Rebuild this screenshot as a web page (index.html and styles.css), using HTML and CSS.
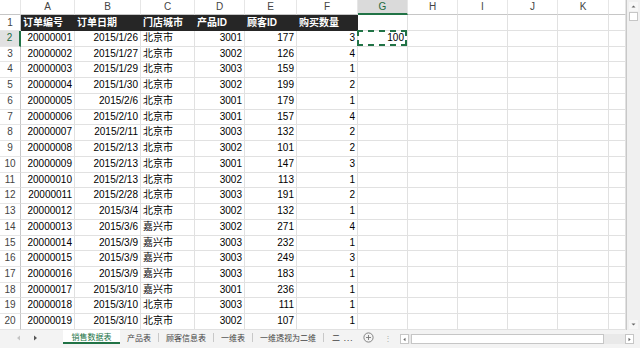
FILE: index.html
```html
<!DOCTYPE html>
<html>
<head>
<meta charset="utf-8">
<link rel="stylesheet" href="styles.css">
</head>
<body>
<div class="app">
  <div class="main">
    <div class="sheet">
      <div class="row hdr"><span></span><span>A</span><span>B</span><span>C</span><span>D</span><span>E</span><span>F</span><span class="sel">G</span><span>H</span><span>I</span><span>J</span><span>K</span><span></span></div>
      <div class="row r1"><span class="rh">1</span><span class="d">订单编号</span><span class="d">订单日期</span><span class="d">门店城市</span><span class="d">产品ID</span><span class="d">顾客ID</span><span class="d">购买数量</span><span></span><span></span><span></span><span></span><span></span><span></span></div>
      <div class="row"><span class="rh sel">2</span><span class="n">20000001</span><span class="n">2015/1/26</span><span>北京市</span><span class="n">3001</span><span class="n">177</span><span class="n">3</span><span class="n cut">100</span><span></span><span></span><span></span><span></span><span></span></div>
      <div class="row"><span class="rh">3</span><span class="n">20000002</span><span class="n">2015/1/27</span><span>北京市</span><span class="n">3002</span><span class="n">126</span><span class="n">4</span><span></span><span></span><span></span><span></span><span></span><span></span></div>
      <div class="row"><span class="rh">4</span><span class="n">20000003</span><span class="n">2015/1/29</span><span>北京市</span><span class="n">3003</span><span class="n">159</span><span class="n">1</span><span></span><span></span><span></span><span></span><span></span><span></span></div>
      <div class="row"><span class="rh">5</span><span class="n">20000004</span><span class="n">2015/1/30</span><span>北京市</span><span class="n">3002</span><span class="n">199</span><span class="n">2</span><span></span><span></span><span></span><span></span><span></span><span></span></div>
      <div class="row"><span class="rh">6</span><span class="n">20000005</span><span class="n">2015/2/6</span><span>北京市</span><span class="n">3001</span><span class="n">179</span><span class="n">1</span><span></span><span></span><span></span><span></span><span></span><span></span></div>
      <div class="row"><span class="rh">7</span><span class="n">20000006</span><span class="n">2015/2/10</span><span>北京市</span><span class="n">3001</span><span class="n">157</span><span class="n">4</span><span></span><span></span><span></span><span></span><span></span><span></span></div>
      <div class="row"><span class="rh">8</span><span class="n">20000007</span><span class="n">2015/2/11</span><span>北京市</span><span class="n">3003</span><span class="n">132</span><span class="n">2</span><span></span><span></span><span></span><span></span><span></span><span></span></div>
      <div class="row"><span class="rh">9</span><span class="n">20000008</span><span class="n">2015/2/13</span><span>北京市</span><span class="n">3002</span><span class="n">101</span><span class="n">2</span><span></span><span></span><span></span><span></span><span></span><span></span></div>
      <div class="row"><span class="rh">10</span><span class="n">20000009</span><span class="n">2015/2/13</span><span>北京市</span><span class="n">3001</span><span class="n">147</span><span class="n">3</span><span></span><span></span><span></span><span></span><span></span><span></span></div>
      <div class="row"><span class="rh">11</span><span class="n">20000010</span><span class="n">2015/2/13</span><span>北京市</span><span class="n">3002</span><span class="n">113</span><span class="n">1</span><span></span><span></span><span></span><span></span><span></span><span></span></div>
      <div class="row"><span class="rh">12</span><span class="n">20000011</span><span class="n">2015/2/28</span><span>北京市</span><span class="n">3003</span><span class="n">191</span><span class="n">2</span><span></span><span></span><span></span><span></span><span></span><span></span></div>
      <div class="row"><span class="rh">13</span><span class="n">20000012</span><span class="n">2015/3/4</span><span>北京市</span><span class="n">3002</span><span class="n">132</span><span class="n">1</span><span></span><span></span><span></span><span></span><span></span><span></span></div>
      <div class="row"><span class="rh">14</span><span class="n">20000013</span><span class="n">2015/3/6</span><span>嘉兴市</span><span class="n">3002</span><span class="n">271</span><span class="n">4</span><span></span><span></span><span></span><span></span><span></span><span></span></div>
      <div class="row"><span class="rh">15</span><span class="n">20000014</span><span class="n">2015/3/9</span><span>嘉兴市</span><span class="n">3003</span><span class="n">232</span><span class="n">1</span><span></span><span></span><span></span><span></span><span></span><span></span></div>
      <div class="row"><span class="rh">16</span><span class="n">20000015</span><span class="n">2015/3/9</span><span>嘉兴市</span><span class="n">3003</span><span class="n">249</span><span class="n">3</span><span></span><span></span><span></span><span></span><span></span><span></span></div>
      <div class="row"><span class="rh">17</span><span class="n">20000016</span><span class="n">2015/3/9</span><span>嘉兴市</span><span class="n">3003</span><span class="n">183</span><span class="n">1</span><span></span><span></span><span></span><span></span><span></span><span></span></div>
      <div class="row"><span class="rh">18</span><span class="n">20000017</span><span class="n">2015/3/10</span><span>嘉兴市</span><span class="n">3001</span><span class="n">236</span><span class="n">1</span><span></span><span></span><span></span><span></span><span></span><span></span></div>
      <div class="row"><span class="rh">19</span><span class="n">20000018</span><span class="n">2015/3/10</span><span>北京市</span><span class="n">3003</span><span class="n">111</span><span class="n">1</span><span></span><span></span><span></span><span></span><span></span><span></span></div>
      <div class="row"><span class="rh">20</span><span class="n">20000019</span><span class="n">2015/3/10</span><span>北京市</span><span class="n">3002</span><span class="n">107</span><span class="n">1</span><span></span><span></span><span></span><span></span><span></span><span></span></div>
    </div>
    <div class="vscroll">
      <div class="vbtn"><svg width="7" height="7" viewBox="0 0 7 7"><path d="M1.5 4.5 L3.5 2.5 L5.5 4.5 Z" fill="#666"/></svg></div>
      <div class="vthumb"></div>
      <div class="vbtn down"><svg width="7" height="7" viewBox="0 0 7 7"><path d="M1.5 2.5 L3.5 4.5 L5.5 2.5 Z" fill="#666"/></svg></div>
    </div>
  </div>
  <div class="tabs">
    <div class="nav">
      <svg width="5" height="6" viewBox="0 0 5 6"><path d="M4 0.5 L1 3 L4 5.5 Z" fill="#c4c4c4"/></svg>
      <svg width="5" height="6" viewBox="0 0 5 6"><path d="M1 0.5 L4 3 L1 5.5 Z" fill="#555"/></svg>
    </div>
    <div class="tab active">销售数据表</div>
    <div class="tab">产品表</div><i class="sep"></i>
    <div class="tab">顾客信息表</div><i class="sep"></i>
    <div class="tab">一维表</div><i class="sep"></i>
    <div class="tab">一维透视为二维</div><i class="sep"></i>
    <div class="tab more">二 ...</div>
    <div class="add"><svg width="11" height="11" viewBox="0 0 11 11"><circle cx="5.5" cy="5.5" r="4.6" fill="none" stroke="#777" stroke-width="0.9"/><path d="M5.5 3 V8 M3 5.5 H8" stroke="#777" stroke-width="0.9"/></svg></div>
    <div class="dots">⋮</div>
    <div class="hscroll">
      <div class="hbtn"><svg width="5" height="5" viewBox="0 0 5 5"><path d="M3.5 0.8 L1.3 2.5 L3.5 4.2 Z" fill="#666"/></svg></div>
      <div class="hthumb"></div>
      <div class="htrack"></div>
      <div class="hbtn"><svg width="5" height="5" viewBox="0 0 5 5"><path d="M1.5 0.8 L3.7 2.5 L1.5 4.2 Z" fill="#666"/></svg></div>
    </div>
  </div>
</div>
</body>
</html>
```
FILE: styles.css
```css
* { box-sizing: border-box; margin: 0; padding: 0; }
html, body { width: 640px; height: 348px; overflow: hidden; background: #fff; }
body {
  font-family: "Liberation Sans", "Noto Sans CJK SC", sans-serif;
  font-size: 10px;
  color: #000;
}
.app { display: flex; flex-direction: column; height: 348px; }
.main { display: flex; height: 330px; flex: none; }
.sheet {
  width: 627px;
  border-right: 1px solid #c8c8c8;
  display: flex;
  flex-direction: column;
  overflow: hidden;
}
.row {
  display: grid;
  grid-template-columns: 21px 54px 66px 54px 50px 52px 61px 50px 50px 50px 50px 51px 17px;
  height: 15.74px;
  flex: none;
}
.row > span {
  border-right: 1px solid #e1e1e1;
  border-bottom: 1px solid #e1e1e1;
  padding: 0 2px;
  line-height: 14.7px;
  white-space: nowrap;
  overflow: hidden;
}
.row > .n { text-align: right; padding-right: 2px; }
.hdr { height: 15px; }
.hdr > span {
  text-align: center;
  color: #444;
  border-right-color: #e6e6e6;
  border-bottom-color: #c6c6c6;
  line-height: 14px;
  font-size: 10px;
}
.hdr > span.sel {
  background: #dadada;
  border-bottom: 2px solid #217346;
  color: #1f6b42;
}
.r1 { height: 16px; }
.r1 > span { line-height: 15px; }
.row > .rh {
  text-align: center;
  color: #444;
  padding: 0;
  border-right-color: #c6c6c6;
  border-bottom-color: #e6e6e6;
}
.row > .rh.sel {
  background: #e1e1e1;
  border-right: 2px solid #217346;
  color: #1f6b42;
}
.r1 > .d {
  background: #262626;
  color: #fff;
  font-weight: bold;
  border-color: #262626;
  padding-left: 2px;
}
.r1 > .d + span:not(.d) { border-bottom-color: #e1e1e1; }
.row > .cut { position: relative; overflow: visible; padding-right: 3px; }
.cut::after {
  content: "";
  position: absolute;
  left: -1px; top: -1px; right: 0; bottom: 0;
  border: 2px dashed #217346;
}
.vscroll {
  width: 13px;
  background: #f0f0f0;
  display: flex;
  flex-direction: column;
  align-items: center;
  padding: 2px 0 1px;
}
.vbtn {
  width: 9px; height: 9px;
  display: flex; align-items: center; justify-content: center;
  background: #f7f7f7;
}
.vbtn.down { margin-top: auto; }
.vthumb {
  width: 9px; height: 9px;
  margin-top: 1px;
  background: #fff;
  border: 1px solid #c6c6c6;
}
.tabs {
  height: 18px;
  flex: none;
  display: flex;
  align-items: flex-start;
  background: #f3f3f3;
  font-size: 8px;
  color: #444;
  font-family: "Noto Sans CJK SC", sans-serif;
}
.nav {
  width: 63px;
  height: 15px;
  display: flex;
  align-items: center;
  padding-left: 16px;
  gap: 12px;
}
.tab {
  height: 15px;
  line-height: 15px;
  padding: 0 7px;
  white-space: nowrap;
}
.tab.active {
  width: 57px;
  text-align: center;
  padding: 0;
  background: #fff;
  color: #217346;
  border-bottom: 2px solid #217346;
  height: 14px;
  line-height: 13px;
}
.sep {
  width: 1px;
  height: 9px;
  margin-top: 3px;
  background: #c8c8c8;
}
.tab.more { padding: 0 0 0 8px; letter-spacing: 1px; }
.add {
  height: 15px;
  display: flex;
  align-items: center;
  margin-left: 10px;
}
.dots {
  height: 15px;
  line-height: 15px;
  margin-left: 10px;
  color: #aaa;
  font-size: 8px;
}
.hscroll {
  margin-left: 8px;
  margin-top: 4px;
  height: 10px;
  width: 234px;
  display: flex;
  align-items: stretch;
  background: #e9e9e9;
}
.hbtn {
  width: 9px;
  display: flex; align-items: center; justify-content: center;
  background: #fff;
  border: 1px solid #c6c6c6;
}
.hthumb {
  width: 193px;
  margin-left: 2px;
  background: #fff;
  border: 1px solid #c6c6c6;
}
.htrack { flex: 1; }
```
